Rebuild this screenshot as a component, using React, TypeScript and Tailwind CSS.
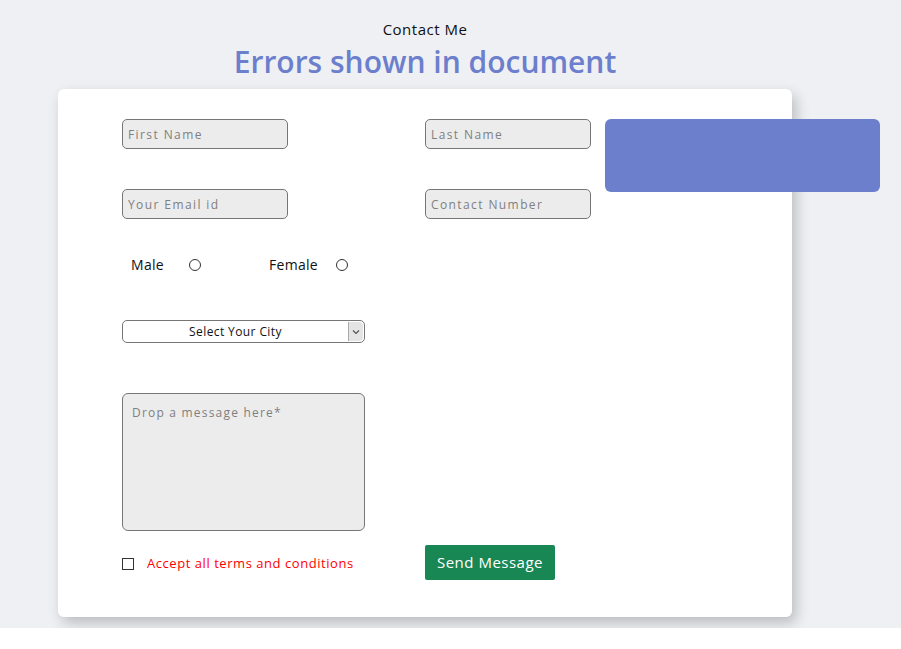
const FONT = { fontFamily: '"Open Sans", "Noto Sans", sans-serif' }

function Field({ placeholder }: { placeholder: string }) {
  return (
    <input
      placeholder={placeholder}
      className="h-[30px] w-[166px] rounded-[5px] border border-[#767676] bg-[#ececec] px-[5px] text-[12px] tracking-[1.4px] text-[#333] outline-none placeholder:text-[#808080]"
    />
  )
}

function Radio({ label, gap }: { label: string; gap: string }) {
  return (
    <label className={`flex items-center ${gap} text-[14px] tracking-[0.3px] text-[#111]`}>
      <span>{label}</span>
      <span className="inline-block h-[12px] w-[12px] rounded-full border border-[#333] bg-white" />
    </label>
  )
}

export default function App() {
  return (
    <div style={FONT} className="min-h-[649px] bg-white">
      <div className="h-[628px] overflow-hidden bg-[#eff0f4] pl-[58px]">
        <div className="flex w-[734px] flex-col items-center pt-[19px]">
          <p className="text-[15px] leading-[20px] tracking-[0.5px] text-[#111]">Contact Me</p>
          <h1 className="mt-[3px] text-[30px] font-semibold leading-[40px] text-[#6c7fcc]">
            Errors shown in document
          </h1>
        </div>

        <div className="mt-[7px] h-[528px] w-[734px] rounded-[6px] bg-white pl-[64px] pt-[30px] shadow-[4px_6px_14px_rgba(0,0,0,0.22)]">
          <div className="grid grid-cols-[166px_166px_275px] grid-rows-[30px_31px] gap-y-[40px]">
            <Field placeholder="First Name" />
            <div className="ml-[137px]">
              <Field placeholder="Last Name" />
            </div>
            <div className="row-span-2 ml-[151px] h-[73px] w-[275px] rounded-[6px] bg-[#6c7fcc]" />
            <Field placeholder="Your Email id" />
            <div className="ml-[137px]">
              <Field placeholder="Contact Number" />
            </div>
          </div>

          <div className="mt-[34px] flex items-center pl-[9px]">
            <Radio label="Male" gap="gap-[25px]" />
            <div className="ml-[68px]">
              <Radio label="Female" gap="gap-[18px]" />
            </div>
          </div>

          <div className="mt-[45px] flex h-[23px] w-[243px] items-center rounded-[5px] border border-[#767676] bg-white">
            <span className="flex-1 text-center text-[12px] tracking-[0.4px] text-[#111]">Select Your City</span>
            <span className="mr-[1px] flex h-[19px] w-[15px] items-center justify-center rounded-r-[4px] border-l border-[#aaa] bg-[#e4e4e4]">
              <svg width="8" height="6" viewBox="0 0 8 6">
                <path d="M1 1.5 L4 4.5 L7 1.5" fill="none" stroke="#555" strokeWidth="1.2" />
              </svg>
            </span>
          </div>

          <textarea
            placeholder="Drop a message here*"
            className="mt-[50px] block h-[138px] w-[243px] resize-none rounded-[6px] border border-[#767676] bg-[#ececec] px-[9px] py-[10px] text-[12px] tracking-[1.2px] text-[#333] outline-none placeholder:text-[#808080]"
          />

          <div className="mt-[14px] flex items-center">
            <span className="mt-[3px] h-[12px] w-[12px] border border-[#333] bg-white" />
            <span className="ml-[13px] mt-[3px] w-[278px] text-[13px] tracking-[0.55px] text-[#ff0000]">
              Accept all terms and conditions
            </span>
            <button className="h-[35px] w-[130px] rounded-[2px] bg-[#198754] text-[15px] tracking-[0.5px] text-white">
              Send Message
            </button>
          </div>
        </div>
      </div>
    </div>
  )
}
